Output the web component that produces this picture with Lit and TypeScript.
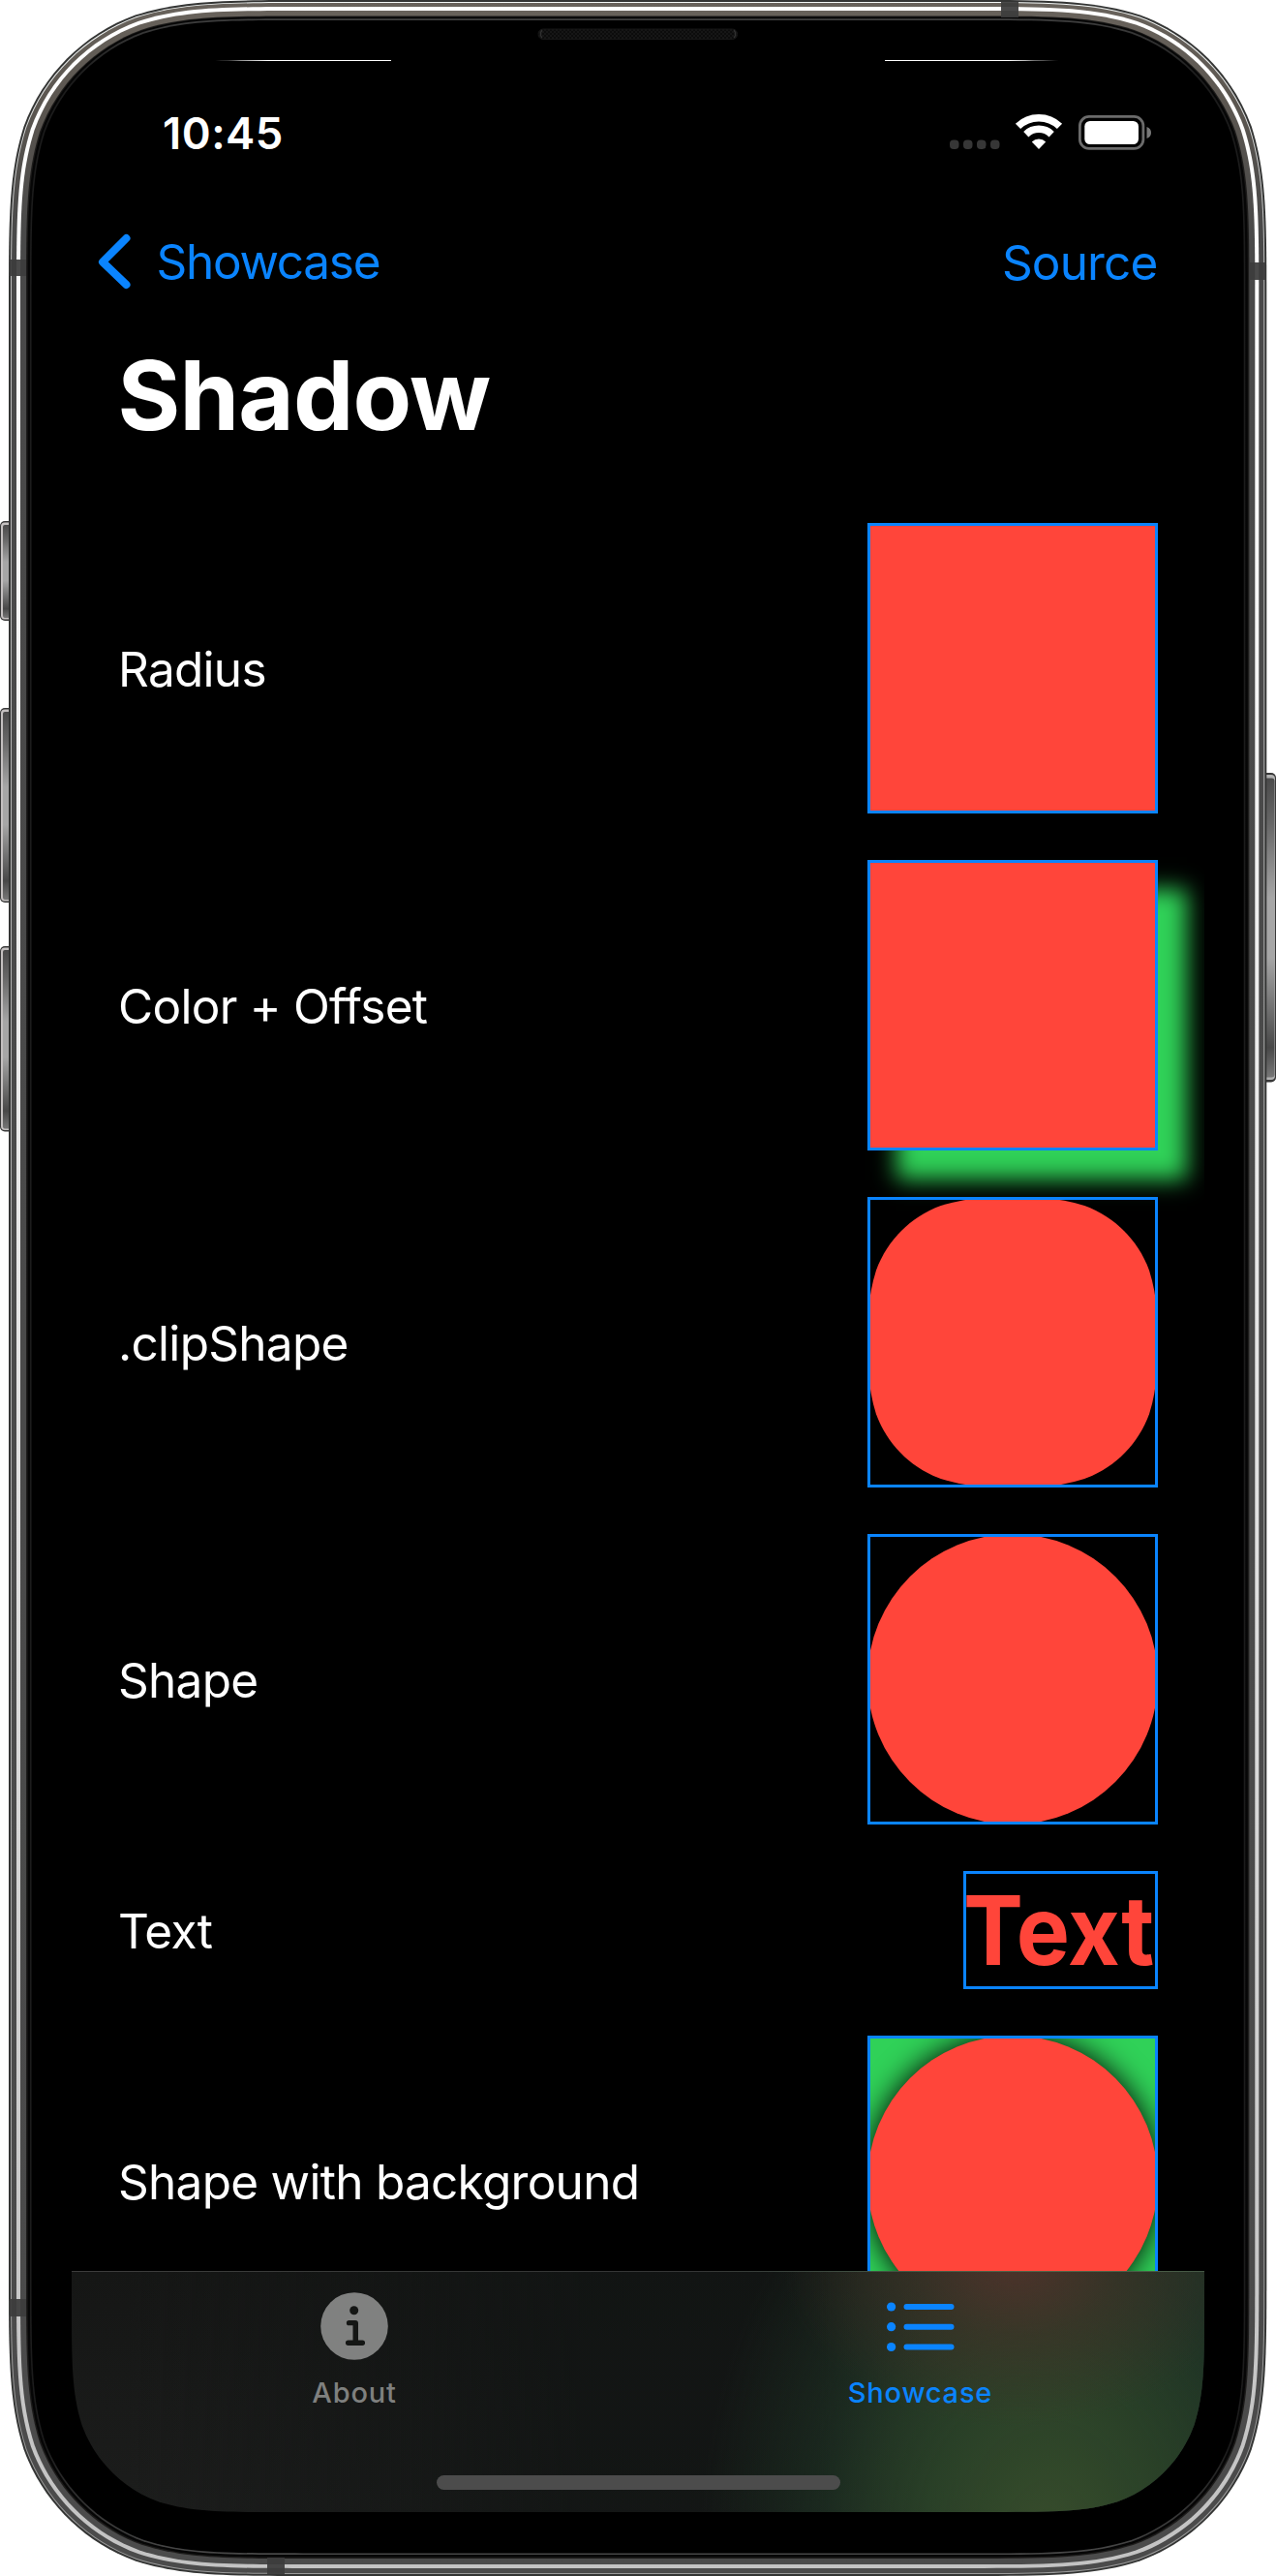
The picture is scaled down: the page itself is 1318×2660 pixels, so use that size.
import { LitElement, html, svg, css, unsafeCSS } from "lit";
import { customElement, property } from "lit/decorators.js";

/** Rectangle with continuous (superelliptic) corners of radius r. */
function squircle(x0: number, y0: number, x1: number, y1: number, r: number): string {
  const a = Math.min(1.528665 * r, (x1 - x0) / 2), b = 1.08849 * r, c = 0.868407 * r, d = 0.631494 * r;
  const e = 0.0749114 * r, f = 0.372824 * r, g = 0.16906 * r;
  const corner = (px: (u: number, v: number) => string) =>
    `C${px(b, 0)} ${px(c, 0)} ${px(d, e)} C${px(f, g)} ${px(g, f)} ${px(e, d)} C${px(0, c)} ${px(0, b)} ${px(0, a)}`;
  const n = (v: number) => v.toFixed(2);
  return [
    `M${n(x1 - a)},${n(y0)}`,
    corner((u, v) => `${n(x1 - u)},${n(y0 + v)}`),
    `L${n(x1)},${n(y1 - a)}`,
    corner((u, v) => `${n(x1 - v)},${n(y1 - u)}`),
    `L${n(x0 + a)},${n(y1)}`,
    corner((u, v) => `${n(x0 + u)},${n(y1 - v)}`),
    `L${n(x0)},${n(y0 + a)}`,
    corner((u, v) => `${n(x0 + v)},${n(y0 + u)}`),
    "Z",
  ].join(" ");
}

const BODY_RADIUS = 207;
/* [side inset, top inset, fill] of each band of the metal rim, outermost first */
const BANDS: [number, number, string][] = [
  [0, 0, "#343534"],
  [2, 2, "url(#thin)"],
  [3, 3, "url(#steel)"],
  [8, 7, "url(#shine)"],
  [12, 11, "url(#steel)"],
  [18, 16.5, "#1c1b1a"],
  [19.5, 17.5, "#060606"],
  [22, 19.2, "url(#lip)"],
  [23.6, 21, "#000"],
];

@customElement("device-frame")
export class DeviceFrame extends LitElement {
  static styles = css`
    :host { display: block; }
    .art { display: block; }
  `;
  render() {
    const left: [number, number][] = [[538, 641], [731, 932], [977, 1168.5]];
    return html`<svg class="art" width="1318" height="2660" viewBox="0 0 1318 2660">
      <defs>
        <linearGradient id="thin" gradientUnits="userSpaceOnUse" x1="0" y1="0" x2="0" y2="2660">
          <stop offset="0" stop-color="#f4f8f7"/><stop offset=".1" stop-color="#bdbdbd"/><stop offset="1" stop-color="#9a9a9a"/>
        </linearGradient>
        <linearGradient id="steel" gradientUnits="userSpaceOnUse" x1="0" y1="0" x2="0" y2="2660">
          <stop offset="0" stop-color="#69635c"/><stop offset=".04" stop-color="#5b5650"/><stop offset=".09" stop-color="#494949"/><stop offset="1" stop-color="#4b4b4b"/>
        </linearGradient>
        <linearGradient id="shine" gradientUnits="userSpaceOnUse" x1="0" y1="0" x2="0" y2="2660">
          <stop offset="0" stop-color="#fff"/><stop offset=".2" stop-color="#f8f8f8"/><stop offset=".6" stop-color="#e0e0e0"/><stop offset=".85" stop-color="#cacaca"/><stop offset="1" stop-color="#c3c3c3"/>
        </linearGradient>
        <linearGradient id="lip" gradientUnits="userSpaceOnUse" x1="0" y1="0" x2="0" y2="2660">
          <stop offset="0" stop-color="#4a4a4a"/><stop offset=".03" stop-color="#1c1c1c"/><stop offset=".95" stop-color="#1c1c1c"/><stop offset="1" stop-color="#505050"/>
        </linearGradient>
        <linearGradient id="button" x1="0" y1="0" x2="0" y2="1">
          <stop offset="0" stop-color="#4a4a4a"/><stop offset=".15" stop-color="#666"/><stop offset=".4" stop-color="#a6a6a6"/><stop offset=".6" stop-color="#a6a6a6"/><stop offset=".9" stop-color="#484848"/><stop offset="1" stop-color="#777"/>
        </linearGradient>
        <radialGradient id="lens"><stop offset="0" stop-color="#060606"/><stop offset=".35" stop-color="#0a0a0a"/><stop offset=".4" stop-color="#1a1718"/><stop offset="1" stop-color="#111"/></radialGradient>
        <linearGradient id="ring" x1="0" y1="0" x2="0" y2="1"><stop offset="0" stop-color="#080808"/><stop offset="1" stop-color="#151515"/></linearGradient>
        <pattern id="mesh" width="4" height="4" patternUnits="userSpaceOnUse"><rect width="4" height="4" fill="#0c0c0c"/><path d="M0 0h2v2H0zM2 2h2v2H2z" fill="#161616"/></pattern>
        <clipPath id="lensClip"><circle cx="484" cy="101" r="12.3"/></clipPath>
      </defs>
      ${left.map(([a, b]) => svg`
        <rect x="0" y=${a} width="20" height=${b - a} rx="5" fill="#383838"/>
        <rect x="1" y=${a + 1.5} width="20" height=${b - a - 3} rx="4" fill="#c4c0c0"/>
        <rect x="3" y=${a + 4} width="20" height=${b - a - 7} rx="2" fill="url(#button)"/>`)}
      <rect x="1298" y="798" width="20" height="319.5" rx="5" fill="#383838"/>
      <rect x="1297" y="800" width="20" height="315" rx="4" fill="#b0b0b0"/>
      <rect x="1290" y="803.5" width="26.5" height="309" rx="3" fill="url(#button)"/>
      ${BANDS.map(([s, t, fill]) => svg`<path d=${squircle(9 + s, t, 1308.3 - s, 2660 - s, BODY_RADIUS - s)} fill=${fill}/>`)}
      <g fill="#3c3c3c" fill-opacity=".93">
        <rect x="9.5" y="268" width="17.5" height="17"/>
        <rect x="9.5" y="2374" width="17.5" height="18"/>
        <rect x="1290" y="271" width="17.5" height="18"/>
        <rect x="1034" y="2" width="18" height="16"/>
        <rect x="276" y="2641" width="18" height="17"/>
      </g>
      <rect x="556" y="30" width="205.5" height="10.5" rx="5" fill="url(#mesh)" stroke="#171717"/>
      <path d="M560 31q-3.5 4.5 0 8M758 31q3.5 4.5 0 8" fill="none" stroke="#303030" stroke-width="1.4"/>
      <circle cx="484" cy="100" r="22" fill="url(#ring)"/>
      <circle cx="484" cy="101" r="13.4" fill="#030303"/>
      <circle cx="484" cy="101" r="12.3" fill="url(#lens)"/>
      <g clip-path="url(#lensClip)">
        <path d="M470 88h10c-4 7-5 16-2 26h-8z" fill="#4e7c66"/>
        <path d="M488 88c6 9 4 17-1 26h12V88z" fill="#12457c"/>
        <circle cx="478" cy="93.5" r="2.2" fill="#b6cfc2"/>
        <circle cx="490.500" cy="107" r="3.500" fill="#cfc8de"/>
      </g>
    </svg>`;
  }
}

type Kind = "radius" | "offset" | "clip" | "shape" | "text" | "backed";

@customElement("shadow-row")
export class ShadowRow extends LitElement {
  static styles = css`
    :host { display: flex; justify-content: space-between; align-items: center; }
    .label { font-size: 49.5px; letter-spacing: -0.72px; line-height: 60px; white-space: nowrap; padding-top: 1px; }
    .sample { position: relative; width: 300px; height: 300px; display: flex; }
    .fill { flex: 1; background: #ff453a; }
    .offset .fill { box-shadow: 30px 30px 22px #30d158; }
    .clip .fill { clip-path: path("${unsafeCSS(squircle(0, 0, 300, 300, 120))}"); }
    .shape .fill, .backed .fill { border-radius: 50%; }
    .backed { background: #30d158; overflow: hidden; }
    .backed .fill { box-shadow: 0 0 30px #000; }
    .outline { position: absolute; inset: 0; border: 3px solid #0a84ff; }
    .sample.text { width: 201px; height: 122px; }
    .word { flex: 1; font-weight: 700; font-size: 99px; line-height: 122px; color: #ff453a; transform: scaleX(0.937); transform-origin: 0 50%; }
  `;
  @property() label = "";
  @property() kind: Kind = "radius";
  render() {
    return html`<span class="label">${this.label}</span>
      <div class="sample ${this.kind}">
        ${this.kind === "text" ? html`<span class="word">Text</span>` : html`<div class="fill"></div>`}
        <div class="outline"></div>
      </div>`;
  }
}

const ROWS: [string, Kind][] = [
  ["Radius", "radius"],
  ["Color + Offset", "offset"],
  [".clipShape", "clip"],
  ["Shape", "shape"],
  ["Text", "text"],
  ["Shape with background", "backed"],
];

@customElement("app-root")
export class AppRoot extends LitElement {
  static styles = css`
    :host { display: block; position: relative; width: 1318px; height: 2660px; overflow: hidden; background: #fff; font-family: Inter, "Liberation Sans", sans-serif; }
    .frame { position: absolute; inset: 0; }
    .device { position: relative; box-sizing: border-box; height: 2660px; padding: 62px 74px 66px; }
    .screen { height: 2532px; display: flex; flex-direction: column; background: #000; color: #fff; clip-path: path("${unsafeCSS(squircle(0, 0, 1170, 2532, 142))}"); }
    .glints { display: flex; justify-content: space-between; padding: 0 148px; height: 1px; }
    .glint { width: 182px; background: linear-gradient(90deg, rgba(255,255,255,.15), #fff 30%); }
    .glint.flip { transform: scaleX(-1); }
    .status { height: 140px; box-sizing: border-box; padding: 47px 54px 0 94px; display: flex; justify-content: space-between; align-items: flex-start; }
    .time { font-weight: 600; font-size: 45.4px; line-height: 56px; letter-spacing: 0.5px; }
    .indicators { margin-top: 7px; }
    .nav { height: 132px; box-sizing: border-box; padding: 2px 48.5px 0 27px; display: flex; align-items: center; justify-content: space-between; color: #0a84ff; font-size: 49.5px; line-height: 60px; letter-spacing: -0.85px; }
    .back { display: flex; align-items: center; gap: 24.5px; letter-spacing: -1.28px; }
    .source { padding-top: 1px; }
    .title { margin: 0; height: 156px; box-sizing: border-box; padding: 13px 0 0 47.5px; font-weight: 700; font-size: 99px; line-height: 120px; letter-spacing: -0.85px; }
    .list { flex: 1; min-height: 0; overflow: hidden; box-sizing: border-box; padding: 49px 48px 0 48px; display: flex; flex-direction: column; gap: 48px; }
    .tabs { height: 249px; box-sizing: border-box; border-top: 1px solid rgba(255,255,255,.14); display: grid; grid-template-columns: 1fr 1fr; grid-template-rows: 210px 1fr;
      background:
        radial-gradient(ellipse 240px 170px at 975px -10px, rgba(88,50,44,.8), rgba(72,50,40,.5) 45%, transparent),
        radial-gradient(ellipse 360px 480px at 1010px 280px, rgba(56,78,44,.97), rgba(42,66,40,.9) 36%, rgba(32,54,38,.6) 65%, transparent),
        linear-gradient(90deg, transparent 66%, rgba(36,46,34,.9) 80%, rgba(28,46,36,.9)),
        linear-gradient(90deg, transparent 5%, rgba(17,20,19,.8) 45%, rgba(17,20,19,.8)),
        linear-gradient(#151615, #1c1d1c); }
    .tab { display: flex; flex-direction: column; align-items: center; font-weight: 500; font-size: 29px; line-height: 36px; letter-spacing: 0.8px; color: #7f807f; gap: 16px; padding: 21px 1px 0 0; }
    .tab.active { color: #0a84ff; padding-right: 2px; }
    .home { grid-column: 1 / 3; justify-self: center; width: 417px; height: 15px; border-radius: 8px; background: #4c4c4c; }
  `;
  render() {
    return html`
      <device-frame class="frame"></device-frame>
      <div class="device"><main class="screen">
        <div class="glints"><div class="glint"></div><div class="glint flip"></div></div>
        <header class="status">
          <span class="time">10:45</span>
          <svg class="indicators" width="210" height="38" viewBox="0 0 210 38">
            <g fill="#363636"><rect x="1" y="27.500" width="9.500" height="9.500" rx="4"/><rect x="15" y="27.500" width="9.500" height="9.500" rx="4"/><rect x="29" y="27.500" width="9.500" height="9.500" rx="4"/><rect x="43" y="27.500" width="9.500" height="9.500" rx="4"/></g>
            <g fill="none" stroke="#fff" stroke-width="7.500"><path d="M71.500 13.400a31 31 0 0 1 43 0"/><path d="M79.800 21.700a19 19 0 0 1 26.400 0"/></g>
            <path d="M93 37l-7.200-7.500a10.300 10.300 0 0 1 14.400 0z" fill="#fff"/>
            <rect x="135.400" y="3.400" width="65.500" height="33" rx="9.500" fill="none" stroke="#6b6b6b" stroke-width="2.800"/>
            <rect x="140.300" y="8" width="55.700" height="24" rx="5.500" fill="#fff"/>
            <path d="M204.500 14q4.500 1.500 4.500 6t-4.500 6z" fill="#777"/>
          </svg>
        </header>
        <nav class="nav">
          <span class="back"><svg width="36" height="60" viewBox="0 0 36 60"><path d="M29.500 6L5 30.500l24.500 23.500" fill="none" stroke="#0a84ff" stroke-width="8" stroke-linecap="round" stroke-linejoin="round"/></svg><span>Showcase</span></span>
          <span class="source">Source</span>
        </nav>
        <h1 class="title">Shadow</h1>
        <section class="list">${ROWS.map(([l, k]) => html`<shadow-row .label=${l} .kind=${k}></shadow-row>`)}</section>
        <footer class="tabs">
          <div class="tab"><svg width="70" height="70" viewBox="0 0 70 70"><circle cx="35" cy="35" r="34.800" fill="#808180"/><g fill="#141614"><circle cx="34.700" cy="18.700" r="4.500"/><path d="M29.500 29h6.500a3 3 0 0 1 3 3v17.500h4.300a2.700 2.700 0 0 1 0 5.500h-14.600a2.700 2.700 0 0 1 0-5.500h4.800v-15.200h-4a2.600 2.600 0 0 1 0-5.300z"/></g></svg><span>About</span></div>
          <div class="tab active"><svg width="70" height="70" viewBox="0 0 70 70" fill="#0a84ff"><circle cx="4.600" cy="15" r="4.600"/><circle cx="4.600" cy="35.700" r="4.600"/><circle cx="4.600" cy="56.500" r="4.600"/><rect x="17.500" y="12" width="52" height="6" rx="3"/><rect x="17.500" y="32.700" width="52" height="6" rx="3"/><rect x="17.500" y="53.500" width="52" height="6" rx="3"/></svg><span>Showcase</span></div>
          <div class="home"></div>
        </footer>
      </main></div>`;
  }
}
